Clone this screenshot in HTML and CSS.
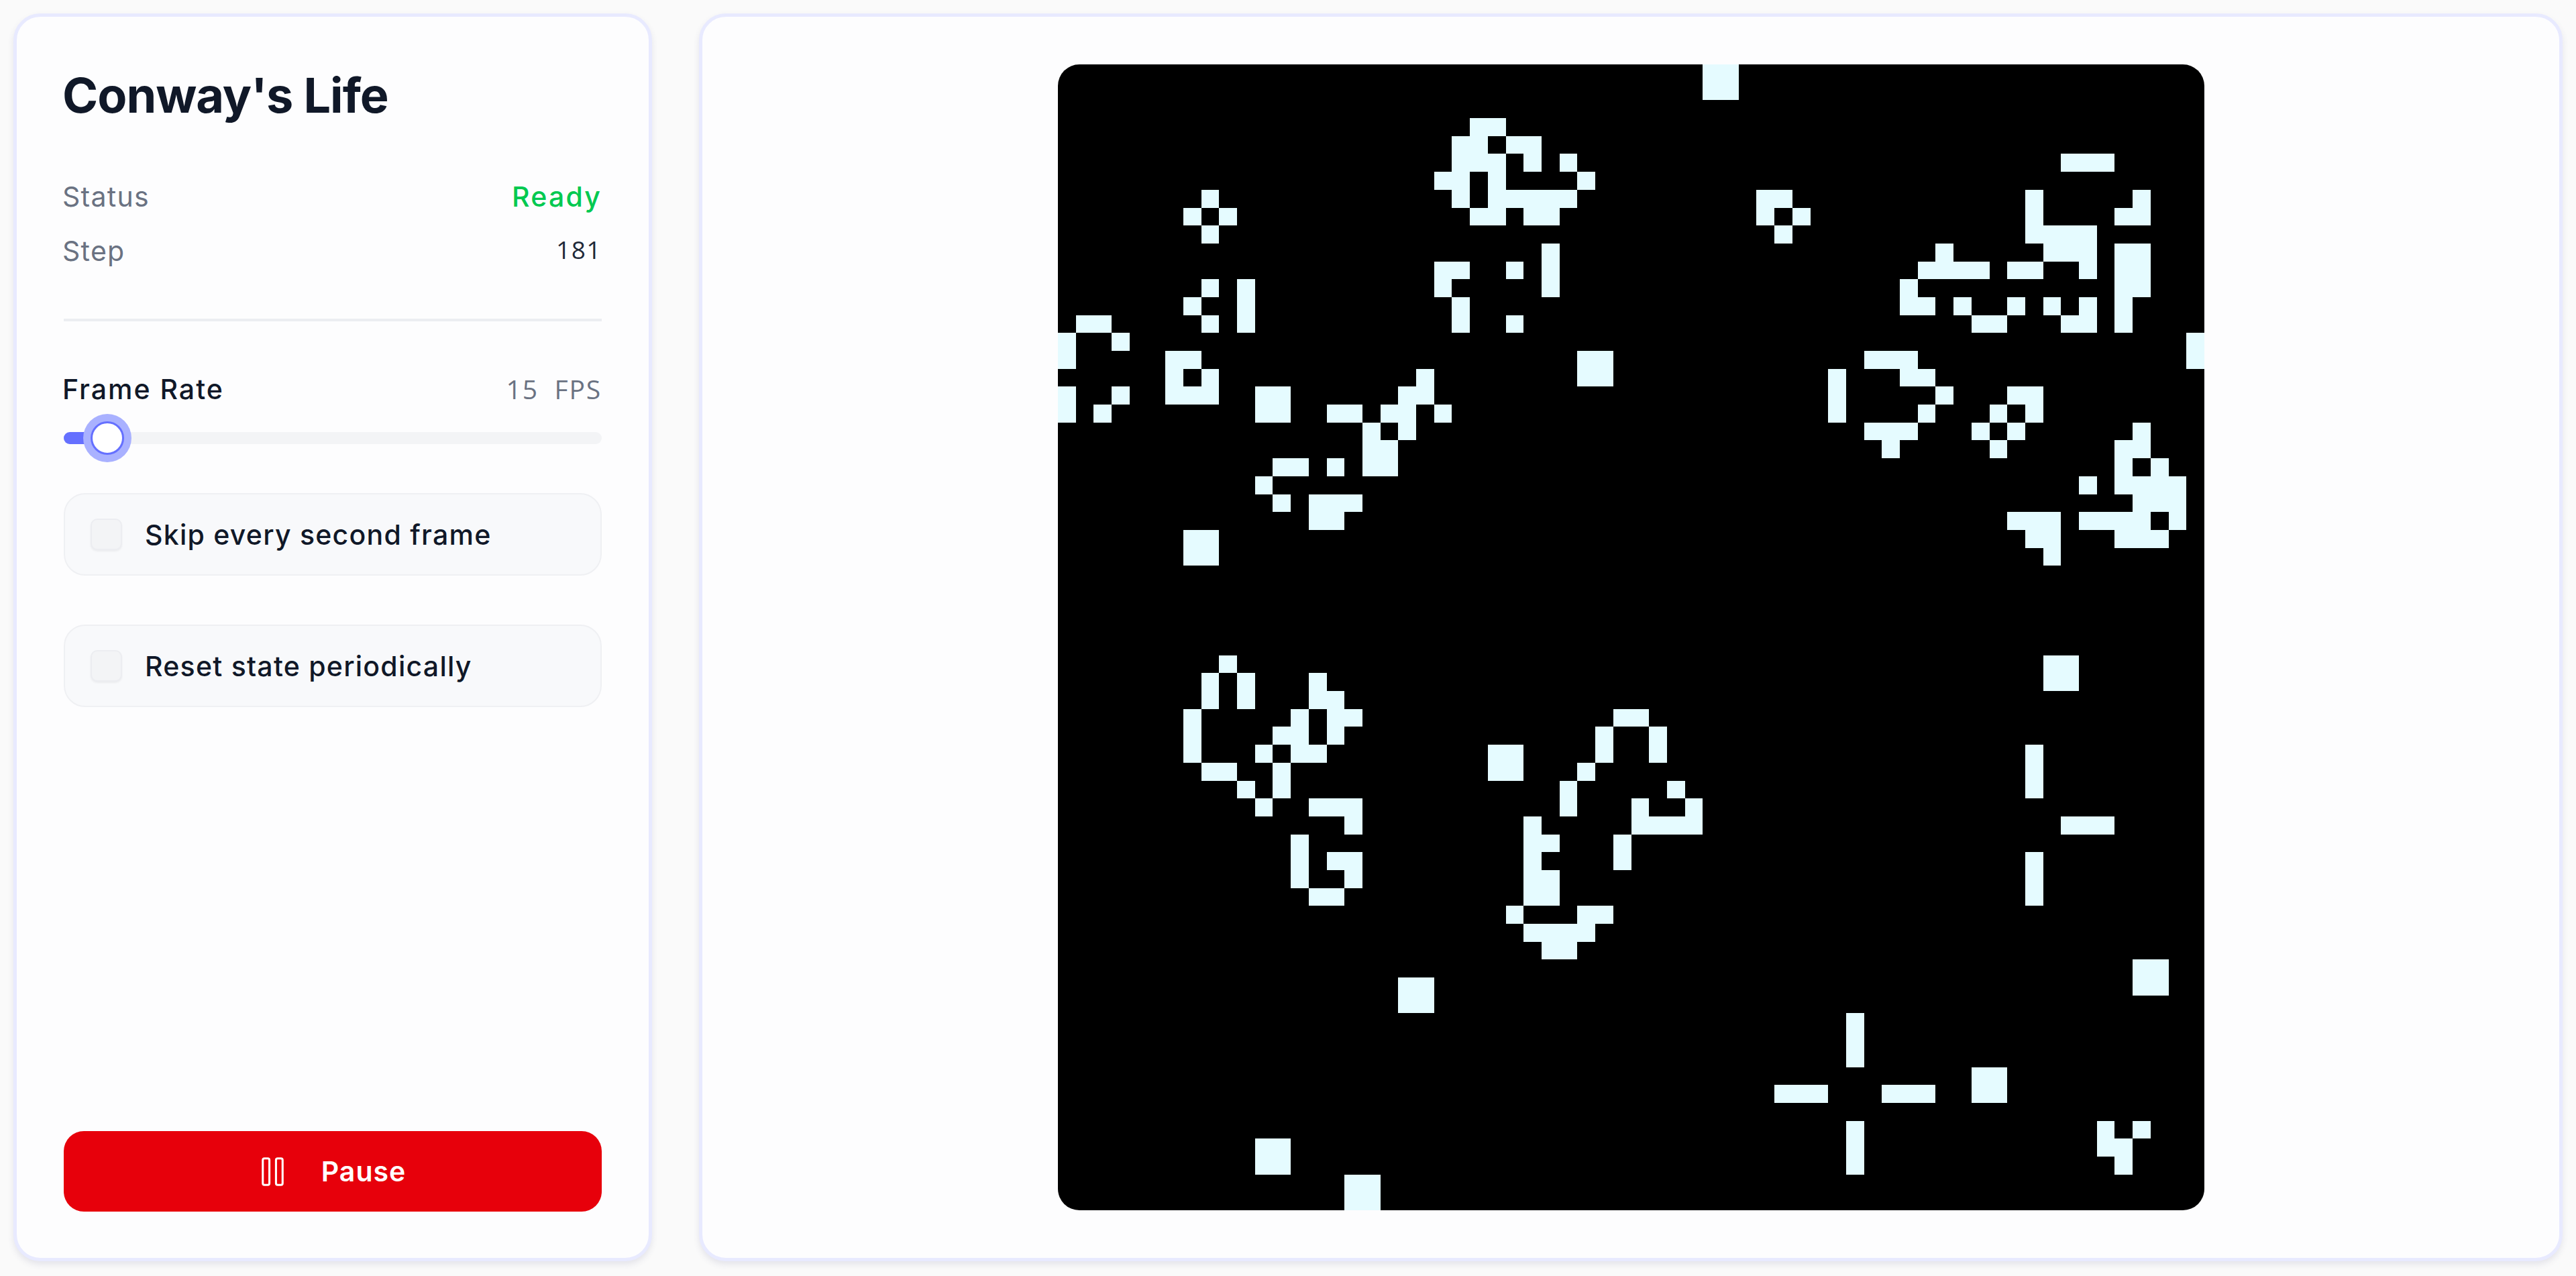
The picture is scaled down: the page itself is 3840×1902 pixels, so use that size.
FILE: index.html
```html
<!DOCTYPE html>
<html lang="en">
<head>
<meta charset="utf-8">
<title>Conway's Life</title>
<link rel="stylesheet" href="styles.css">
</head>
<body>
<main class="app">
  <aside class="panel side">
    <h1 class="title">Conway's Life</h1>
    <div class="stat stat-first"><span class="stat-label">Status</span><span class="stat-ready">Ready</span></div>
    <div class="stat stat-next"><span class="stat-label">Step</span><span class="stat-num">181</span></div>
    <hr class="divider">
    <div class="rate-head"><span class="rate-label">Frame Rate</span><span class="rate-value">15&nbsp; FPS</span></div>
    <div class="slider">
      <div class="slider-fill" style="width:50px"></div>
      <div class="slider-thumb" style="left:40px"></div>
    </div>
    <label class="option"><span class="box"></span><span class="option-text">Skip every second frame</span></label>
    <label class="option"><span class="box"></span><span class="option-text">Reset state periodically</span></label>
    <button class="pause" type="button">
      <svg class="pause-icon" viewBox="0 0 24 24" fill="none" stroke="currentColor" stroke-width="1.25" stroke-linecap="round" stroke-linejoin="round"><rect x="14" y="4" width="4" height="16" rx="1"/><rect x="6" y="4" width="4" height="16" rx="1"/></svg>
      <span>Pause</span>
    </button>
  </aside>
  <section class="panel stage">
    <svg class="board" viewBox="0 0 64 64" preserveAspectRatio="none" shape-rendering="crispEdges">
      <path class="cells" d="M36 0h2v2h-2z M23 3h2v1h-2z M22 4h2v1h-2z M25 4h2v1h-2z M22 5h3v1h-3z M26 5h1v1h-1z M28 5h1v1h-1z M56 5h3v1h-3z M21 6h2v1h-2z M24 6h1v1h-1z M29 6h1v1h-1z M8 7h1v1h-1z M22 7h1v1h-1z M24 7h5v1h-5z M39 7h2v1h-2z M54 7h1v1h-1z M60 7h1v1h-1z M7 8h1v1h-1z M9 8h1v1h-1z M23 8h2v1h-2z M26 8h2v1h-2z M39 8h1v1h-1z M41 8h1v1h-1z M54 8h1v1h-1z M59 8h2v1h-2z M8 9h1v1h-1z M40 9h1v1h-1z M54 9h4v1h-4z M27 10h1v1h-1z M49 10h1v1h-1z M55 10h3v1h-3z M59 10h2v1h-2z M21 11h2v1h-2z M25 11h1v1h-1z M27 11h1v1h-1z M48 11h4v1h-4z M53 11h2v1h-2z M57 11h1v1h-1z M59 11h2v1h-2z M8 12h1v1h-1z M10 12h1v1h-1z M21 12h1v1h-1z M27 12h1v1h-1z M47 12h1v1h-1z M59 12h2v1h-2z M7 13h1v1h-1z M10 13h1v1h-1z M22 13h1v1h-1z M47 13h2v1h-2z M50 13h1v1h-1z M53 13h1v1h-1z M55 13h1v1h-1z M57 13h1v1h-1z M59 13h1v1h-1z M1 14h2v1h-2z M8 14h1v1h-1z M10 14h1v1h-1z M22 14h1v1h-1z M25 14h1v1h-1z M51 14h2v1h-2z M56 14h2v1h-2z M59 14h1v1h-1z M0 15h1v1h-1z M3 15h1v1h-1z M63 15h1v1h-1z M0 16h1v1h-1z M6 16h2v1h-2z M29 16h2v1h-2z M45 16h3v1h-3z M63 16h1v1h-1z M6 17h1v1h-1z M8 17h1v1h-1z M20 17h1v1h-1z M29 17h2v1h-2z M43 17h1v1h-1z M47 17h2v1h-2z M0 18h1v1h-1z M3 18h1v1h-1z M6 18h3v1h-3z M11 18h2v1h-2z M19 18h2v1h-2z M43 18h1v1h-1z M49 18h1v1h-1z M53 18h2v1h-2z M0 19h1v1h-1z M2 19h1v1h-1z M11 19h2v1h-2z M15 19h2v1h-2z M18 19h2v1h-2z M21 19h1v1h-1z M43 19h1v1h-1z M48 19h1v1h-1z M52 19h1v1h-1z M54 19h1v1h-1z M17 20h1v1h-1z M19 20h1v1h-1z M45 20h3v1h-3z M51 20h1v1h-1z M53 20h1v1h-1z M60 20h1v1h-1z M17 21h2v1h-2z M46 21h1v1h-1z M52 21h1v1h-1z M59 21h2v1h-2z M12 22h2v1h-2z M15 22h1v1h-1z M17 22h2v1h-2z M59 22h1v1h-1z M61 22h1v1h-1z M11 23h1v1h-1z M57 23h1v1h-1z M59 23h4v1h-4z M12 24h1v1h-1z M14 24h3v1h-3z M60 24h3v1h-3z M14 25h2v1h-2z M53 25h3v1h-3z M57 25h4v1h-4z M62 25h1v1h-1z M7 26h2v1h-2z M54 26h2v1h-2z M59 26h3v1h-3z M7 27h2v1h-2z M55 27h1v1h-1z M9 33h1v1h-1z M55 33h2v1h-2z M8 34h1v1h-1z M10 34h1v1h-1z M14 34h1v1h-1z M55 34h2v1h-2z M8 35h1v1h-1z M10 35h1v1h-1z M14 35h2v1h-2z M7 36h1v1h-1z M13 36h1v1h-1z M15 36h2v1h-2z M31 36h2v1h-2z M7 37h1v1h-1z M12 37h2v1h-2z M15 37h1v1h-1z M30 37h1v1h-1z M33 37h1v1h-1z M7 38h1v1h-1z M11 38h1v1h-1z M13 38h2v1h-2z M24 38h2v1h-2z M30 38h1v1h-1z M33 38h1v1h-1z M54 38h1v1h-1z M8 39h2v1h-2z M12 39h1v1h-1z M24 39h2v1h-2z M29 39h1v1h-1z M54 39h1v1h-1z M10 40h1v1h-1z M12 40h1v1h-1z M28 40h1v1h-1z M34 40h1v1h-1z M54 40h1v1h-1z M11 41h1v1h-1z M14 41h3v1h-3z M28 41h1v1h-1z M32 41h1v1h-1z M35 41h1v1h-1z M16 42h1v1h-1z M26 42h1v1h-1z M32 42h4v1h-4z M56 42h3v1h-3z M13 43h1v1h-1z M26 43h2v1h-2z M31 43h1v1h-1z M13 44h1v1h-1z M15 44h2v1h-2z M26 44h1v1h-1z M31 44h1v1h-1z M54 44h1v1h-1z M13 45h1v1h-1z M16 45h1v1h-1z M26 45h2v1h-2z M54 45h1v1h-1z M14 46h2v1h-2z M26 46h2v1h-2z M54 46h1v1h-1z M25 47h1v1h-1z M29 47h2v1h-2z M26 48h4v1h-4z M27 49h2v1h-2z M60 50h2v2h-2z M19 51h2v2h-2z M44 53h1v3h-1z M51 56h2v2h-2z M40 57h3v1h-3z M46 57h3v1h-3z M44 59h1v3h-1z M58 59h1v1h-1z M60 59h1v1h-1z M11 60h2v2h-2z M58 60h2v1h-2z M59 61h1v1h-1z M16 62h2v2h-2z"/>
    </svg>
  </section>
</main>
</body>
</html>
```

FILE: styles.css
```css
* { box-sizing: border-box; }

html, body {
  margin: 0;
  height: 100%;
}

body {
  background: #fafafa;
  font-family: Inter, "Noto Sans", sans-serif;
  color: #101828;
}

.app {
  display: flex;
  gap: 70px;
  height: 1902px;
  padding: 20px 20px 22px;
}

.panel {
  background: #fdfdfe;
  border: 5px solid #e8eaff;
  border-radius: 40px;
  box-shadow: 0 5px 10px rgba(70, 70, 120, 0.12);
}

.side {
  display: flex;
  flex-direction: column;
  flex: 0 0 952px;
  padding: 71px 70px 69px;
}

.stage {
  flex: 1;
  display: flex;
  justify-content: center;
  align-items: center;
}

.title {
  margin: 0 0 0 -2px;
  height: 92px;
  font-size: 72px;
  line-height: 92px;
  font-weight: 700;
  letter-spacing: -1px;
  color: #101828;
}

.stat {
  display: flex;
  justify-content: space-between;
  height: 56px;
  line-height: 56px;
  font-size: 41px;
  letter-spacing: 1.3px;
}

.stat-first { margin-top: 77px; }
.stat-next { margin-top: 25px; }
.stat-label { color: #6a7282; margin-left: -2px; }
.stat-ready { color: #00c950; font-weight: 500; letter-spacing: 2.2px; }

.stat-num {
  font-family: "Open Sans", sans-serif;
  font-size: 37px;
  letter-spacing: 1.5px;
  line-height: 52px;
  color: #1e2939;
}

.divider {
  margin: 73px 0 0;
  height: 4px;
  border: 0;
  background: #eceef2;
}

.rate-head {
  display: flex;
  justify-content: space-between;
  margin-top: 73px;
  height: 56px;
  line-height: 56px;
}

.rate-label {
  margin-left: -2px;
  font-size: 41px;
  font-weight: 500;
  letter-spacing: 2px;
  color: #101828;
}

.rate-value {
  font-family: "Open Sans", sans-serif;
  font-size: 39px;
  letter-spacing: 1.8px;
  color: #6a7282;
}

.slider {
  position: relative;
  height: 18px;
  margin-top: 36px;
  background: #f3f4f6;
  border-radius: 9px;
}

.slider-fill {
  height: 100%;
  background: #6570ff;
  border-radius: 9px;
}

.slider-thumb {
  position: absolute;
  top: -16px;
  width: 50px;
  height: 50px;
  background: #fff;
  border: 3px solid #6570ff;
  border-radius: 50%;
  box-shadow: 0 0 0 11px #a9b1ff;
}

.option {
  display: flex;
  align-items: center;
  gap: 34px;
  height: 123px;
  margin-top: 73px;
  padding-left: 38px;
  background: #f8f9fb;
  border: 2px solid #eff0f3;
  border-radius: 32px;
}

.box {
  width: 47px;
  height: 47px;
  background: #f3f4f6;
  border: 2px solid #ecedf1;
  border-radius: 10px;
  box-shadow: 0 2px 3px rgba(0, 0, 0, 0.05);
}

.option-text {
  font-size: 41px;
  font-weight: 500;
  letter-spacing: 1.25px;
  color: #101828;
}

.pause {
  display: flex;
  align-items: center;
  justify-content: center;
  gap: 43px;
  height: 120px;
  margin-top: auto;
  padding: 0 10px 0 0;
  background: #e7000b;
  border: 0;
  border-radius: 30px;
  color: #fff;
  font-family: inherit;
  font-size: 41px;
  font-weight: 600;
  letter-spacing: 1px;
}

.pause-icon {
  width: 59px;
  height: 59px;
}

.board {
  display: block;
  width: 1709px;
  height: 1708px;
  background: #000;
  border-radius: 32px;
}

.cells { fill: #e5fbff; }
```
